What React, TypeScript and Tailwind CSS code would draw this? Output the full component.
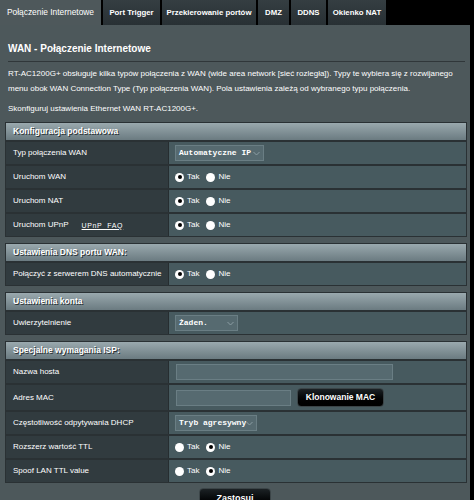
import * as React from 'react';

// --------------------------------
// Small pieces
// --------------------------------
const FONT = "font-['Liberation_Sans',Arial,sans-serif]";
const MONO = "font-['Liberation_Mono','DejaVu_Sans_Mono',monospace]";

function Radio({ checked }: { checked?: boolean }) {
  return (
    <span className="inline-flex h-[9px] w-[9px] items-center justify-center rounded-full bg-white">
      {checked && <span className="h-[4px] w-[4px] rounded-full bg-black" />}
    </span>
  );
}

function YesNo({ yes }: { yes: boolean }) {
  return (
    <div className="flex items-center text-white">
      <Radio checked={yes} />
      <span className="ml-[3px]">Tak</span>
      <span className="ml-[7px] flex">
        <Radio checked={!yes} />
      </span>
      <span className="ml-[3px]">Nie</span>
    </div>
  );
}

function Chevron() {
  return (
    <svg width="7" height="5" viewBox="0 0 7 5" className="ml-auto mr-[3px] shrink-0">
      <path d="M0.5 1 L3.5 4 L6.5 1" fill="none" stroke="#8a9ca2" strokeWidth="1" />
    </svg>
  );
}

function Select({ value, width }: { value: string; width: string }) {
  return (
    <div
      className={`${width} flex h-[16px] items-center whitespace-nowrap border border-[#6a7e84] bg-[#566a70] pl-[3px] text-[8px] font-bold text-white ${MONO}`}
    >
      <span>{value}</span>
      <Chevron />
    </div>
  );
}

type RowProps = { label: React.ReactNode; children?: React.ReactNode; tall?: boolean };

function Row({ label, children, tall }: RowProps) {
  return (
    <div className={`flex border-t-2 border-[#2a3134] ${tall ? 'h-[27px]' : 'h-[24px]'}`}>
      <div className="flex w-[162px] items-center whitespace-nowrap bg-[#313b3f] pl-[7px] text-white">
        {label}
      </div>
      <div className="flex flex-1 items-center border-l border-[#262d30] bg-[#475a5f] pl-[6px]">
        {children}
      </div>
    </div>
  );
}

function Section({ title, children }: { title: string; children: React.ReactNode }) {
  return (
    <div className="ml-[5px] w-[462px] border border-[#2a3134] bg-[#2a3134]">
      <div className="flex h-[17px] items-center bg-linear-to-b from-[#9aa9ae] to-[#6b7b81] pl-[7px] text-[8.5px] font-bold text-white [text-shadow:1px_1px_0_#2d3538]">
        {title}
      </div>
      {children}
    </div>
  );
}

// --------------------------------
// Tabs
// --------------------------------
const tabs = [
  { name: 'Połączenie Internetowe', w: 'w-[101px]', active: true },
  { name: 'Port Trigger', w: 'w-[57px]' },
  { name: 'Przekierowanie portów', w: 'w-[94px]' },
  { name: 'DMZ', w: 'w-[31px]' },
  { name: 'DDNS', w: 'w-[35px]' },
  { name: 'Okienko NAT', w: 'w-[58px]' },
];

export default function App() {
  return (
    <div className={`h-[500px] w-[474px] overflow-hidden bg-black text-[8px] leading-none ${FONT}`}>
      <div className="flex h-[25px] gap-[2px]">
        {tabs.map((t) =>
          t.active ? (
            <div
              key={t.name}
              className={`${t.w} flex items-center justify-center whitespace-nowrap bg-[#4e585b] text-[8.4px] text-white`}
            >
              {t.name}
            </div>
          ) : (
            <div
              key={t.name}
              className={`${t.w} flex items-center justify-center whitespace-nowrap bg-linear-to-b from-[#353e42] to-[#283034] text-[7.8px] font-bold text-white`}
            >
              {t.name}
            </div>
          )
        )}
      </div>

      <div className="w-[470px] bg-[#4d585b] pb-[10px]">
        <div className="pl-[8px] pt-[16px] text-[10px] font-bold leading-[15px] text-white">
          WAN - Połączenie Internetowe
        </div>
        <div className="ml-[8px] mr-[5px] mt-[5px] border-t border-[#30373a]" />
        <p className="mt-[4px] whitespace-nowrap pl-[8px] leading-[15px] text-white">
          RT-AC1200G+ obsługuje kilka typów połączenia z WAN (wide area network [sieć rozległa]). Typy te wybiera się z rozwijanego
          <br />
          menu obok WAN Connection Type (Typ połączenia WAN). Pola ustawienia zależą od wybranego typu połączenia.
        </p>
        <p className="mt-[5px] pl-[8px] leading-[15px] text-white">Skonfiguruj ustawienia Ethernet WAN RT-AC1200G+.</p>

        <div className="mt-[6px] flex flex-col gap-[6px]">
          <Section title="Konfiguracja podstawowa">
            <Row label="Typ połączenia WAN">
              <Select value="Automatyczne IP" width="w-[89px]" />
            </Row>
            <Row label="Uruchom WAN">
              <YesNo yes />
            </Row>
            <Row label="Uruchom NAT">
              <YesNo yes />
            </Row>
            <Row
              label={
                <>
                  <span>Uruchom UPnP</span>
                  <span className="ml-[13px] text-[7px] tracking-[0.6px] underline">UPnP&nbsp;&nbsp;FAQ</span>
                </>
              }
            >
              <YesNo yes />
            </Row>
          </Section>

          <Section title="Ustawienia DNS portu WAN:">
            <Row label="Połączyć z serwerem DNS automatycznie">
              <YesNo yes />
            </Row>
          </Section>

          <Section title="Ustawienia konta">
            <Row label="Uwierzytelnienie">
              <Select value="Żaden." width="w-[63px]" />
            </Row>
          </Section>

          <Section title="Specjalne wymagania ISP:">
            <Row label="Nazwa hosta">
              <div className="ml-[1px] h-[16px] w-[217px] border border-[#6a7e84] bg-[#566a70]" />
            </Row>
            <Row label="Adres MAC" tall>
              <div className="ml-[1px] h-[16px] w-[115px] border border-[#6a7e84] bg-[#566a70]" />
              <button
                type="button"
                className="ml-[6px] flex h-[19px] w-[87px] items-center justify-center rounded-[4px] border border-[#3b4447] bg-linear-to-b from-[#1c2225] to-[#000] text-[8.5px] font-bold text-white"
              >
                Klonowanie MAC
              </button>
            </Row>
            <Row label="Częstotliwość odpytywania DHCP">
              <Select value="Tryb agresywny" width="w-[82px]" />
            </Row>
            <Row label="Rozszerz wartość TTL">
              <YesNo yes={false} />
            </Row>
            <Row label="Spoof LAN TTL value">
              <YesNo yes={false} />
            </Row>
          </Section>
        </div>

        <div className="mt-[5px] flex justify-center">
          <button
            type="button"
            className="flex h-[24px] w-[72px] items-start justify-center rounded-[4px] border border-[#3b4447] bg-linear-to-b from-[#1c2225] to-[#000] pt-[5px] text-[9px] font-bold text-white"
          >
            Zastosuj
          </button>
        </div>
      </div>
    </div>
  );
}
